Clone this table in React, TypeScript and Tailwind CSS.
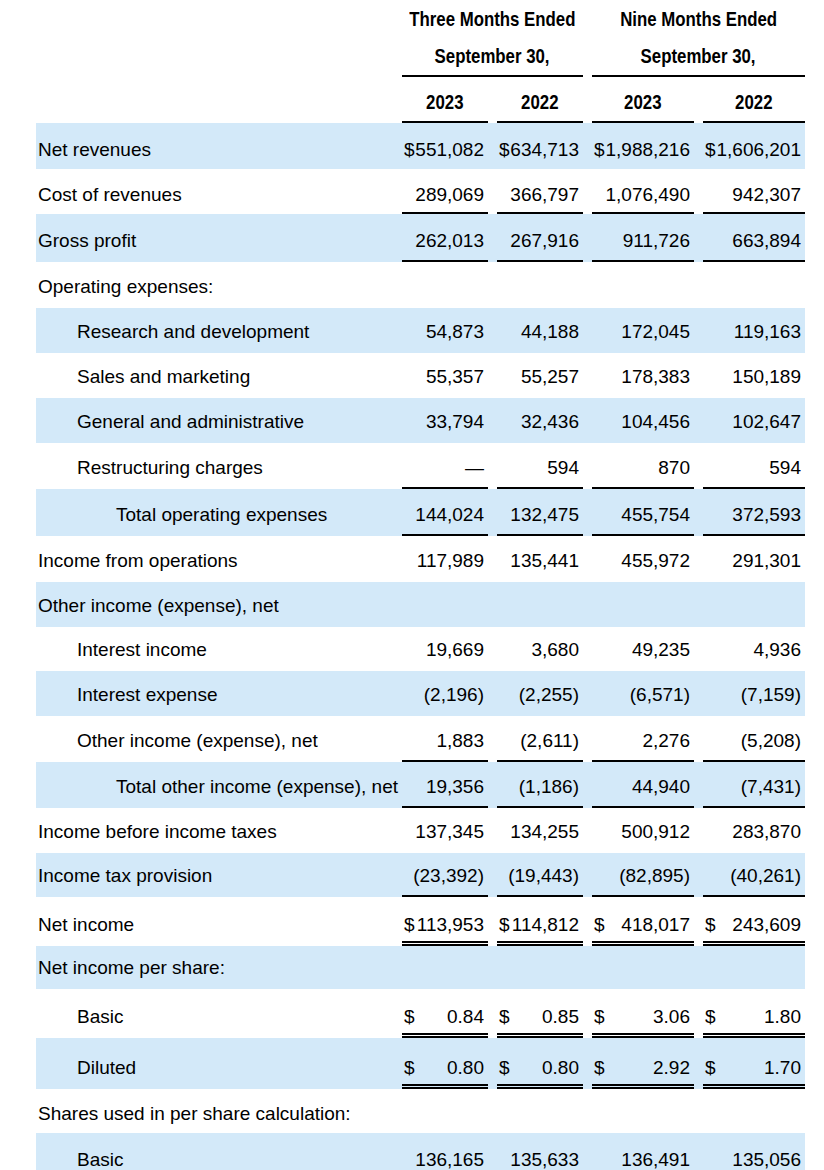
type Border = 'single' | 'double' | undefined

interface StatementRow {
	label: string
	indent?: 0 | 1 | 2
	height: string
	values?: string[]
	dollar?: boolean
	border?: Border
	low?: boolean
}

const cellWidths = ['w-[95px]', 'w-[95px]', 'w-[111px]', 'w-[111px]']
const indents = ['pl-[2px]', 'pl-[41px]', 'pl-[80px]']

const rows: StatementRow[] = [
	{ label: 'Net revenues', height: 'h-[46px]', values: ['551,082', '634,713', '1,988,216', '1,606,201'], dollar: true, low: true },
	{ label: 'Cost of revenues', height: 'h-[45px]', values: ['289,069', '366,797', '1,076,490', '942,307'], border: 'single', low: true },
	{ label: 'Gross profit', height: 'h-[48px]', values: ['262,013', '267,916', '911,726', '663,894'], border: 'single' },
	{ label: 'Operating expenses:', height: 'h-[46px]' },
	{ label: 'Research and development', indent: 1, height: 'h-[45px]', values: ['54,873', '44,188', '172,045', '119,163'] },
	{ label: 'Sales and marketing', indent: 1, height: 'h-[45px]', values: ['55,357', '55,257', '178,383', '150,189'] },
	{ label: 'General and administrative', indent: 1, height: 'h-[45px]', values: ['33,794', '32,436', '104,456', '102,647'] },
	{ label: 'Restructuring charges', indent: 1, height: 'h-[46px]', values: ['—', '594', '870', '594'], border: 'single' },
	{ label: 'Total operating expenses', indent: 2, height: 'h-[47px]', values: ['144,024', '132,475', '455,754', '372,593'], border: 'single' },
	{ label: 'Income from operations', height: 'h-[46px]', values: ['117,989', '135,441', '455,972', '291,301'] },
	{ label: 'Other income (expense), net', height: 'h-[45px]' },
	{ label: 'Interest income', indent: 1, height: 'h-[44px]', values: ['19,669', '3,680', '49,235', '4,936'] },
	{ label: 'Interest expense', indent: 1, height: 'h-[45px]', values: ['(2,196)', '(2,255)', '(6,571)', '(7,159)'] },
	{ label: 'Other income (expense), net', indent: 1, height: 'h-[46px]', values: ['1,883', '(2,611)', '2,276', '(5,208)'], border: 'single' },
	{ label: 'Total other income (expense), net', indent: 2, height: 'h-[46px]', values: ['19,356', '(1,186)', '44,940', '(7,431)'], border: 'single' },
	{ label: 'Income before income taxes', height: 'h-[45px]', values: ['137,345', '134,255', '500,912', '283,870'] },
	{ label: 'Income tax provision', height: 'h-[44px]', values: ['(23,392)', '(19,443)', '(82,895)', '(40,261)'], border: 'single' },
	{ label: 'Net income', height: 'h-[49px]', values: ['113,953', '114,812', '418,017', '243,609'], dollar: true, border: 'double' },
	{ label: 'Net income per share:', height: 'h-[43px]' },
	{ label: 'Basic', indent: 1, height: 'h-[49px]', values: ['0.84', '0.85', '3.06', '1.80'], dollar: true, border: 'double' },
	{ label: 'Diluted', indent: 1, height: 'h-[51px]', values: ['0.80', '0.80', '2.92', '1.70'], dollar: true, border: 'double' },
	{ label: 'Shares used in per share calculation:', height: 'h-[44px]', low: true },
	{ label: 'Basic', indent: 1, height: 'h-[46px]', values: ['136,165', '135,633', '136,491', '135,056'], low: true },
]

function borderClass(border: Border, low?: boolean) {
	if (border === 'single') return low ? 'border-b-2 border-black pb-[6px]' : 'border-b-2 border-black pb-[8px]'
	if (border === 'double') return 'border-b-[5px] border-double border-black pb-[5px]'
	return low ? 'pb-[8px]' : 'pb-[10px]'
}

// narrow bold heading text, squeezed from Liberation Sans
function Narrow({ children }: { children: string }) {
	return <span className="inline-block origin-center scale-x-[0.82] whitespace-nowrap">{children}</span>
}

function HeaderRows() {
	return (
		<div className="text-[20.5px] font-bold leading-[22px]">
			<div className="flex h-[77px]">
				<div className="w-[357px] shrink-0" />
				<div className="w-[190px] shrink-0 pl-[9px]">
					<div className="flex h-full flex-col border-b-2 border-black">
						<div className="flex h-[37px] items-center justify-center">
							<Narrow>Three Months Ended</Narrow>
						</div>
						<div className="flex h-[37px] items-center justify-center">
							<Narrow>September 30,</Narrow>
						</div>
					</div>
				</div>
				<div className="w-[222px] shrink-0 pl-[9px]">
					<div className="flex h-full flex-col border-b-2 border-black">
						<div className="flex h-[37px] items-center justify-center">
							<Narrow>Nine Months Ended</Narrow>
						</div>
						<div className="flex h-[37px] items-center justify-center">
							<Narrow>September 30,</Narrow>
						</div>
					</div>
				</div>
			</div>
			<div className="flex h-[46px]">
				<div className="w-[357px] shrink-0" />
				{['2023', '2022', '2023', '2022'].map((year, i) => (
					<div key={i} className={`${cellWidths[i]} shrink-0 pl-[9px]`}>
						<div className="flex h-full items-end justify-center border-b-2 border-black pb-[8px]">
							<Narrow>{year}</Narrow>
						</div>
					</div>
				))}
			</div>
		</div>
	)
}

function Row({ row, shaded }: { row: StatementRow; shaded: boolean }) {
	return (
		<div className={`flex ${row.height} ${shaded ? 'bg-[#d3e9f9]' : ''}`}>
			<div
				className={`flex w-[357px] shrink-0 items-end whitespace-nowrap ${row.low ? 'pb-[8px]' : 'pb-[10px]'} ${
					indents[row.indent ?? 0]
				}`}
			>
				{row.label}
			</div>
			{row.values?.map((value, i) => (
				<div key={i} className={`${cellWidths[i]} shrink-0 pl-[9px]`}>
					<div
						className={`flex h-full items-end whitespace-nowrap pl-[2px] pr-[4px] ${
							row.dollar ? 'justify-between' : 'justify-end'
						} ${borderClass(row.border, row.low)}`}
					>
						{row.dollar && <span>$</span>}
						<span>{value}</span>
					</div>
				</div>
			))}
		</div>
	)
}

export default function App() {
	return (
		<div className="h-[1170px] w-[824px] overflow-hidden bg-white font-['Liberation_Sans',Arial,sans-serif] text-[19px] leading-[22px] text-black">
			<div className="ml-[36px] w-[769px]">
				<HeaderRows />
				{rows.map((row, i) => (
					<Row key={i} row={row} shaded={i % 2 === 0} />
				))}
			</div>
		</div>
	)
}
